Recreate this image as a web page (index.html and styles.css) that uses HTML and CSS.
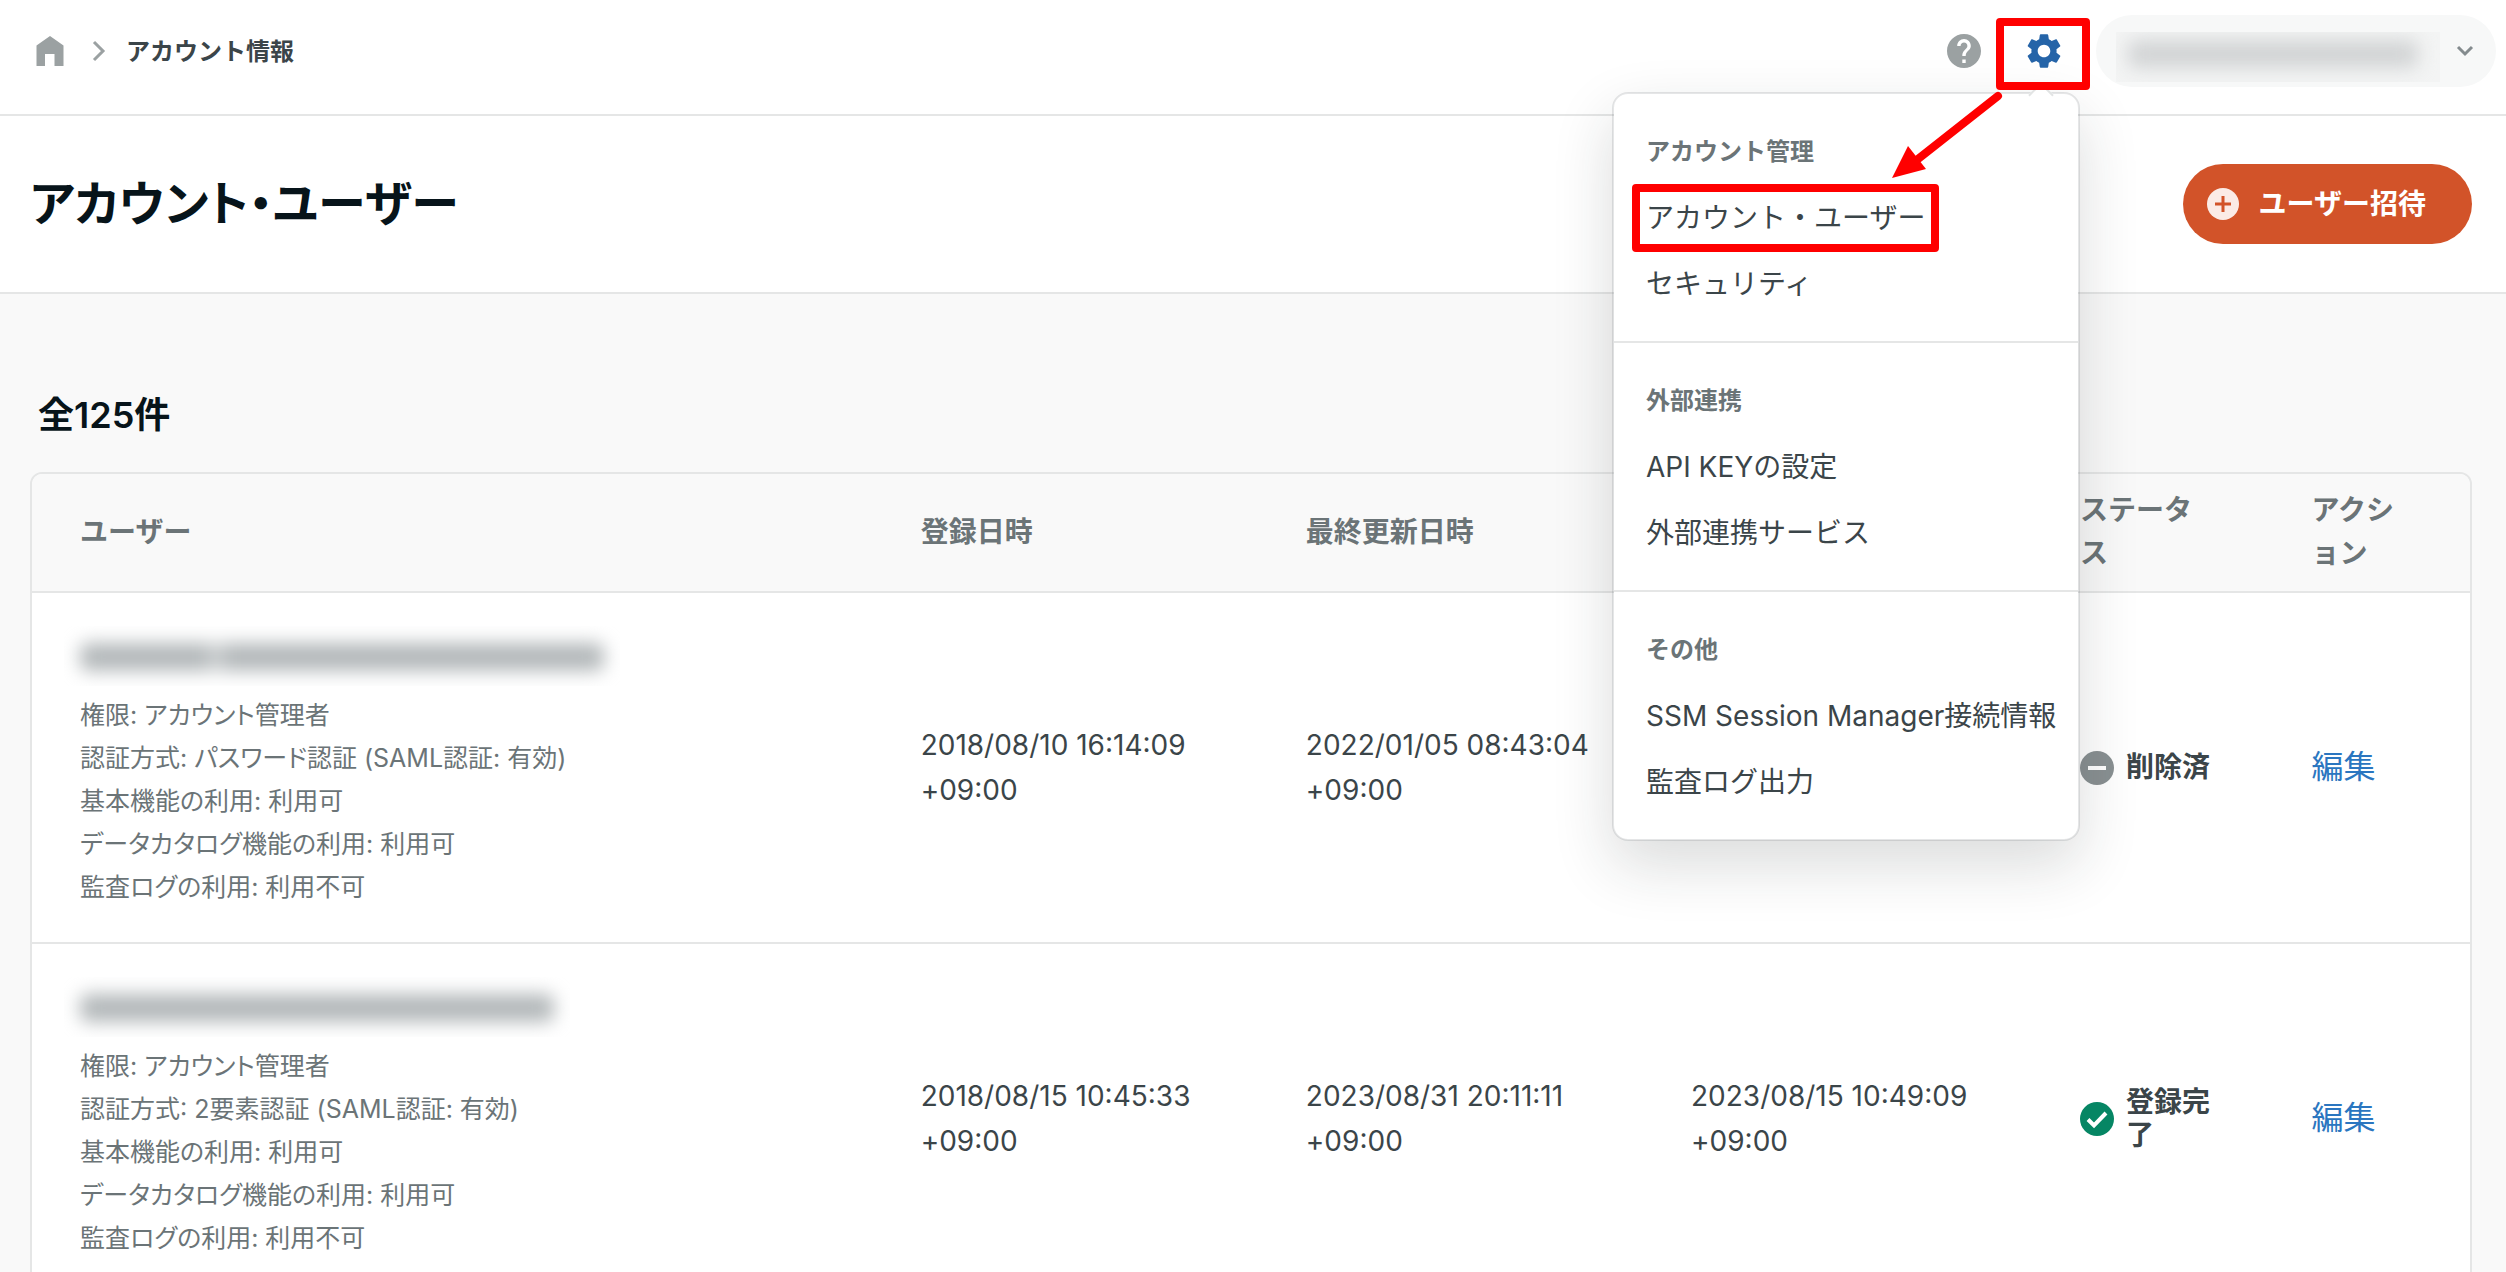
FILE: index.html
```html
<!DOCTYPE html>
<html lang="ja">
<head>
<meta charset="utf-8">
<meta name="viewport" content="width=device-width, initial-scale=1">
<title>アカウント・ユーザー</title>
<link rel="stylesheet" href="styles.css">
</head>
<body>
<header class="topbar">
  <nav class="breadcrumb" aria-label="パンくずリスト">
    <a class="breadcrumb-home" href="#" aria-label="ホーム">
      <svg width="28" height="30" viewBox="0 0 28 30"><path fill="#9ba1a2" d="M14 0 27.500 9.500V30H18.500V18H9V30H.5V9.500Z"/></svg>
    </a>
    <svg class="breadcrumb-sep" width="14" height="22" viewBox="0 0 14 22"><path d="M2 2l9 9-9 9" fill="none" stroke="#9ba1a2" stroke-width="3"/></svg>
    <span class="breadcrumb-current">アカウント情報</span>
  </nav>
  <div class="tools">
    <button class="icon-button" type="button" aria-label="ヘルプ">
      <svg width="34" height="34" viewBox="2 2 20 20"><path fill="#9ba1a2" d="M12 2C6.480 2 2 6.480 2 12s4.480 10 10 10 10-4.480 10-10S17.520 2 12 2zm1 17h-2v-2h2v2zm2.070-7.750l-.9.920C13.450 12.900 13 13.500 13 15h-2v-.5c0-1.100.45-2.100 1.170-2.830l1.240-1.260c.37-.36.59-.86.59-1.410 0-1.100-.9-2-2-2s-2 .9-2 2H8c0-2.210 1.790-4 4-4s4 1.790 4 4c0 .88-.36 1.680-.93 2.250z"/></svg>
    </button>
    <div class="settings">
      <button class="settings-button" type="button" aria-label="設定" aria-expanded="true">
        <svg width="42" height="42" viewBox="0 0 24 24"><path fill="#2564a8" d="M19.140 12.940c.04-.3.06-.61.06-.94 0-.32-.02-.64-.07-.94l2.030-1.580c.18-.14.23-.41.12-.61l-1.920-3.320c-.12-.22-.37-.29-.59-.22l-2.390.96c-.5-.38-1.030-.7-1.620-.94l-.36-2.540c-.04-.24-.24-.41-.48-.41h-3.840c-.24 0-.43.17-.47.41l-.36 2.540c-.59.24-1.130.57-1.620.94l-2.390-.96c-.22-.08-.47 0-.59.22L2.740 8.870c-.12.21-.08.47.12.61l2.030 1.580c-.05.3-.09.63-.09.94s.02.64.07.94l-2.030 1.580c-.18.14-.23.41-.12.61l1.920 3.320c.12.22.37.29.59.22l2.390-.96c.5.38 1.030.7 1.620.94l.36 2.540c.05.24.24.41.48.41h3.840c.24 0 .44-.17.47-.41l.36-2.540c.59-.24 1.130-.56 1.620-.94l2.390.96c.22.08.47 0 .59-.22l1.920-3.320c.12-.22.07-.47-.12-.61l-2.010-1.580zM12 15.600c-1.980 0-3.600-1.620-3.600-3.600s1.620-3.600 3.600-3.600 3.600 1.620 3.600 3.600-1.620 3.600-3.600 3.600z"/></svg>
      </button>
      <div class="menu">
        <section class="menu-group">
          <h2 class="menu-title">アカウント管理</h2>
          <a class="menu-item" href="#"><span class="marked">アカウント・ユーザー</span></a>
          <a class="menu-item" href="#">セキュリティ</a>
        </section>
        <section class="menu-group">
          <h2 class="menu-title">外部連携</h2>
          <a class="menu-item" href="#">API KEYの設定</a>
          <a class="menu-item" href="#">外部連携サービス</a>
        </section>
        <section class="menu-group">
          <h2 class="menu-title">その他</h2>
          <a class="menu-item" href="#">SSM Session Manager接続情報</a>
          <a class="menu-item" href="#">監査ログ出力</a>
        </section>
        <svg class="menu-arrow" width="120" height="100" viewBox="0 0 120 100"><path d="M114 10 34 73" stroke="#f00" stroke-width="8" stroke-linecap="round"/><path d="M8 92 24 60 42 83Z" fill="#f00"/></svg>
      </div>
    </div>
    <button class="account" type="button" aria-label="アカウント">
      <span class="account-name"><span class="smudge smudge-light"></span></span>
      <svg width="18" height="12" viewBox="0 0 18 12"><path d="M2 2l7 7 7-7" fill="none" stroke="#848b8e" stroke-width="3"/></svg>
    </button>
  </div>
</header>
<div class="page-head">
  <h1 class="page-title">アカウント・ユーザー</h1>
  <button class="invite" type="button">
    <svg width="32" height="32" viewBox="0 0 32 32"><circle cx="16" cy="16" r="16" fill="#fbebe6"/><path d="M16 8v16M8 16h16" stroke="#d25329" stroke-width="3"/></svg>
    ユーザー招待
  </button>
</div>
<main class="content">
  <p class="count">全125件</p>
  <div class="card">
    <table class="users">
      <colgroup><col class="col-user"><col class="col-created"><col class="col-updated"><col class="col-login"><col class="col-status"><col class="col-action"></colgroup>
      <thead>
        <tr><th>ユーザー</th><th>登録日時</th><th>最終更新日時</th><th></th><th>ステータス</th><th>アクション</th></tr>
      </thead>
      <tbody>
        <tr>
          <td>
            <div class="user-name user-name-long"><span class="smudge smudge-split"></span></div>
            <ul class="details">
              <li>権限: アカウント管理者</li>
              <li>認証方式: パスワード認証 (SAML認証: 有効)</li>
              <li>基本機能の利用: 利用可</li>
              <li>データカタログ機能の利用: 利用可</li>
              <li>監査ログの利用: 利用不可</li>
            </ul>
          </td>
          <td>2018/08/10 16:14:09 +09:00</td>
          <td>2022/01/05 08:43:04 +09:00</td>
          <td></td>
          <td><div class="status"><svg width="34" height="34" viewBox="0 0 34 34"><circle cx="17" cy="17" r="17" fill="#899092"/><path d="M8 17h18" stroke="#fff" stroke-width="4"/></svg><span>削除済</span></div></td>
          <td><a class="edit" href="#">編集</a></td>
        </tr>
        <tr>
          <td>
            <div class="user-name"><span class="smudge"></span></div>
            <ul class="details">
              <li>権限: アカウント管理者</li>
              <li>認証方式: 2要素認証 (SAML認証: 有効)</li>
              <li>基本機能の利用: 利用可</li>
              <li>データカタログ機能の利用: 利用可</li>
              <li>監査ログの利用: 利用不可</li>
            </ul>
          </td>
          <td>2018/08/15 10:45:33 +09:00</td>
          <td>2023/08/31 20:11:11 +09:00</td>
          <td>2023/08/15 10:49:09 +09:00</td>
          <td><div class="status"><svg width="34" height="34" viewBox="0 0 34 34"><circle cx="17" cy="17" r="17" fill="#068664"/><path d="M8 17.500l6 6L26 11" fill="none" stroke="#fff" stroke-width="4"/></svg><span>登録完了</span></div></td>
          <td><a class="edit" href="#">編集</a></td>
        </tr>
      </tbody>
    </table>
  </div>
</main>
</body>
</html>
```
FILE: styles.css
```css
* { box-sizing: border-box; }

body {
  margin: 0;
  background: #f9f9f9;
  color: #3b4549;
  font-family: Inter, "Noto Sans CJK JP", sans-serif;
  font-size: 28px;
  line-height: 45px;
}

h1, h2, p, ul { margin: 0; padding: 0; }
ul { list-style: none; }
a { color: inherit; text-decoration: none; }
svg { display: block; flex: none; }
button { border: 0; background: none; padding: 0; font: inherit; }

/* Top bar */
.topbar {
  display: flex;
  align-items: center;
  justify-content: space-between;
  height: 116px;
  padding: 0 10px 12px 36px;
  background: #fff;
  border-bottom: 2px solid #e5e6e6;
}
.breadcrumb { display: flex; align-items: center; font-size: 24px; font-weight: 700; }
.breadcrumb-sep { margin: 0 20px 0 28px; }
.tools { display: flex; align-items: center; }
.icon-button { margin-right: 15px; }

.settings { position: relative; margin: 6px 6px 0 0; }
.settings-button {
  position: relative;
  z-index: 3;
  display: flex;
  align-items: center;
  justify-content: center;
  width: 94px;
  height: 72px;
  padding: 0 0 6px 2px;
  border: 8px solid #f00;
  border-radius: 4px;
}
.account {
  display: flex;
  align-items: center;
  justify-content: space-between;
  width: 400px;
  height: 72px;
  padding: 0 22px 0 20px;
  background: #f7f8f8;
  border-radius: 36px;
}
.account-name { overflow: hidden; width: 324px; height: 50px; margin-top: 12px; padding: 8px 12px; background: #f3f4f4; }

/* Obscured names */
.smudge {
  display: block;
  height: 28px;
  background: #b3b8ba;
  border-radius: 8px;
  filter: blur(9px);
}
.smudge-split { background: linear-gradient(90deg, #b3b8ba 24%, #d6d9da 26%, #b3b8ba 28%); }
.smudge-light { background: #d2d4d5; width: 290px; }

/* Settings menu */
.menu {
  position: absolute;
  z-index: 2;
  top: 74px;
  right: 10px;
  width: 468px;
  background: #fff;
  background-clip: padding-box;
  border: 2px solid rgba(40, 50, 55, 0.12);
  border-radius: 16px;
  box-shadow: 0 24px 60px rgba(30, 40, 40, 0.16);
}
.menu::before {
  content: "";
  position: absolute;
  top: -8px;
  right: 28px;
  width: 16px;
  height: 16px;
  background: #fff;
  border: solid #e2e4e4;
  border-width: 2px 0 0 2px;
  transform: rotate(45deg);
  z-index: -1;
}
.menu-group { padding: 25px 32px 24px; border-bottom: 2px solid #e5e6e6; }
.menu-group:last-of-type { border-bottom: 0; }
.menu-title { font-size: 24px; font-weight: 700; line-height: 66px; color: #6b7477; }
.menu-item { display: flex; align-items: center; height: 66px; white-space: nowrap; }
.marked {
  margin: 0 -14px;
  padding: 4px 6px 3px;
  border: 8px solid #f00;
  border-radius: 4px;
}
.menu-arrow { position: absolute; top: -8px; right: 74px; }

/* Page heading */
.page-head {
  display: flex;
  align-items: center;
  justify-content: space-between;
  height: 178px;
  padding: 0 34px 0 30px;
  background: #fff;
  border-bottom: 2px solid #e5e6e6;
}
.page-title {
  font-size: 48px;
  line-height: 72px;
  font-weight: 700;
  color: #07141a;
  font-feature-settings: "palt";
}
.invite {
  display: flex;
  align-items: center;
  gap: 20px;
  height: 80px;
  padding: 0 46px 0 24px;
  border-radius: 40px;
  background: #d25329;
  color: #fff;
  font-weight: 700;
}

/* User list */
.content { padding: 92px 34px 80px 30px; }
.count { padding-left: 8px; margin-bottom: 28px; font-size: 36px; line-height: 58px; font-weight: 600; color: #07141a; }
.card { overflow: hidden; background: #fff; border: 2px solid #e5e6e6; border-radius: 12px; }
.users { width: 100%; table-layout: fixed; border-collapse: collapse; }
.col-user { width: 36.45%; }
.col-created { width: 15.8%; }
.col-updated { width: 15.8%; }
.col-login { width: 15.95%; }
.col-status { width: 9.5%; }
.col-action { width: 6.5%; }
.users th {
  padding: 15px 92px 16px 0;
  background: #f9f9f9;
  color: #6b7477;
  font-weight: 700;
  line-height: 43px;
  text-align: left;
  word-break: break-all;
  border-bottom: 2px solid #e5e6e6;
}
.users td { padding: 36px 92px 36px 0; border-bottom: 2px solid #e5e6e6; }
.users th:first-child, .users td:first-child { padding-left: 48px; padding-right: 0; }
.users th:last-child, .users td:last-child { padding-right: 56px; }
.user-name { overflow: hidden; width: 506px; height: 60px; margin: -3px -16px 8px; padding: 17px 16px; }
.user-name-long { width: 556px; }
.details { color: #6b7477; font-size: 25px; line-height: 43px; font-feature-settings: "palt"; }
.users td:first-child { padding-bottom: 33px; }
.status { display: flex; align-items: center; gap: 12px; margin-right: -4px; font-weight: 700; line-height: 33px; }
.edit { color: #2b76c0; font-size: 32px; }
```
